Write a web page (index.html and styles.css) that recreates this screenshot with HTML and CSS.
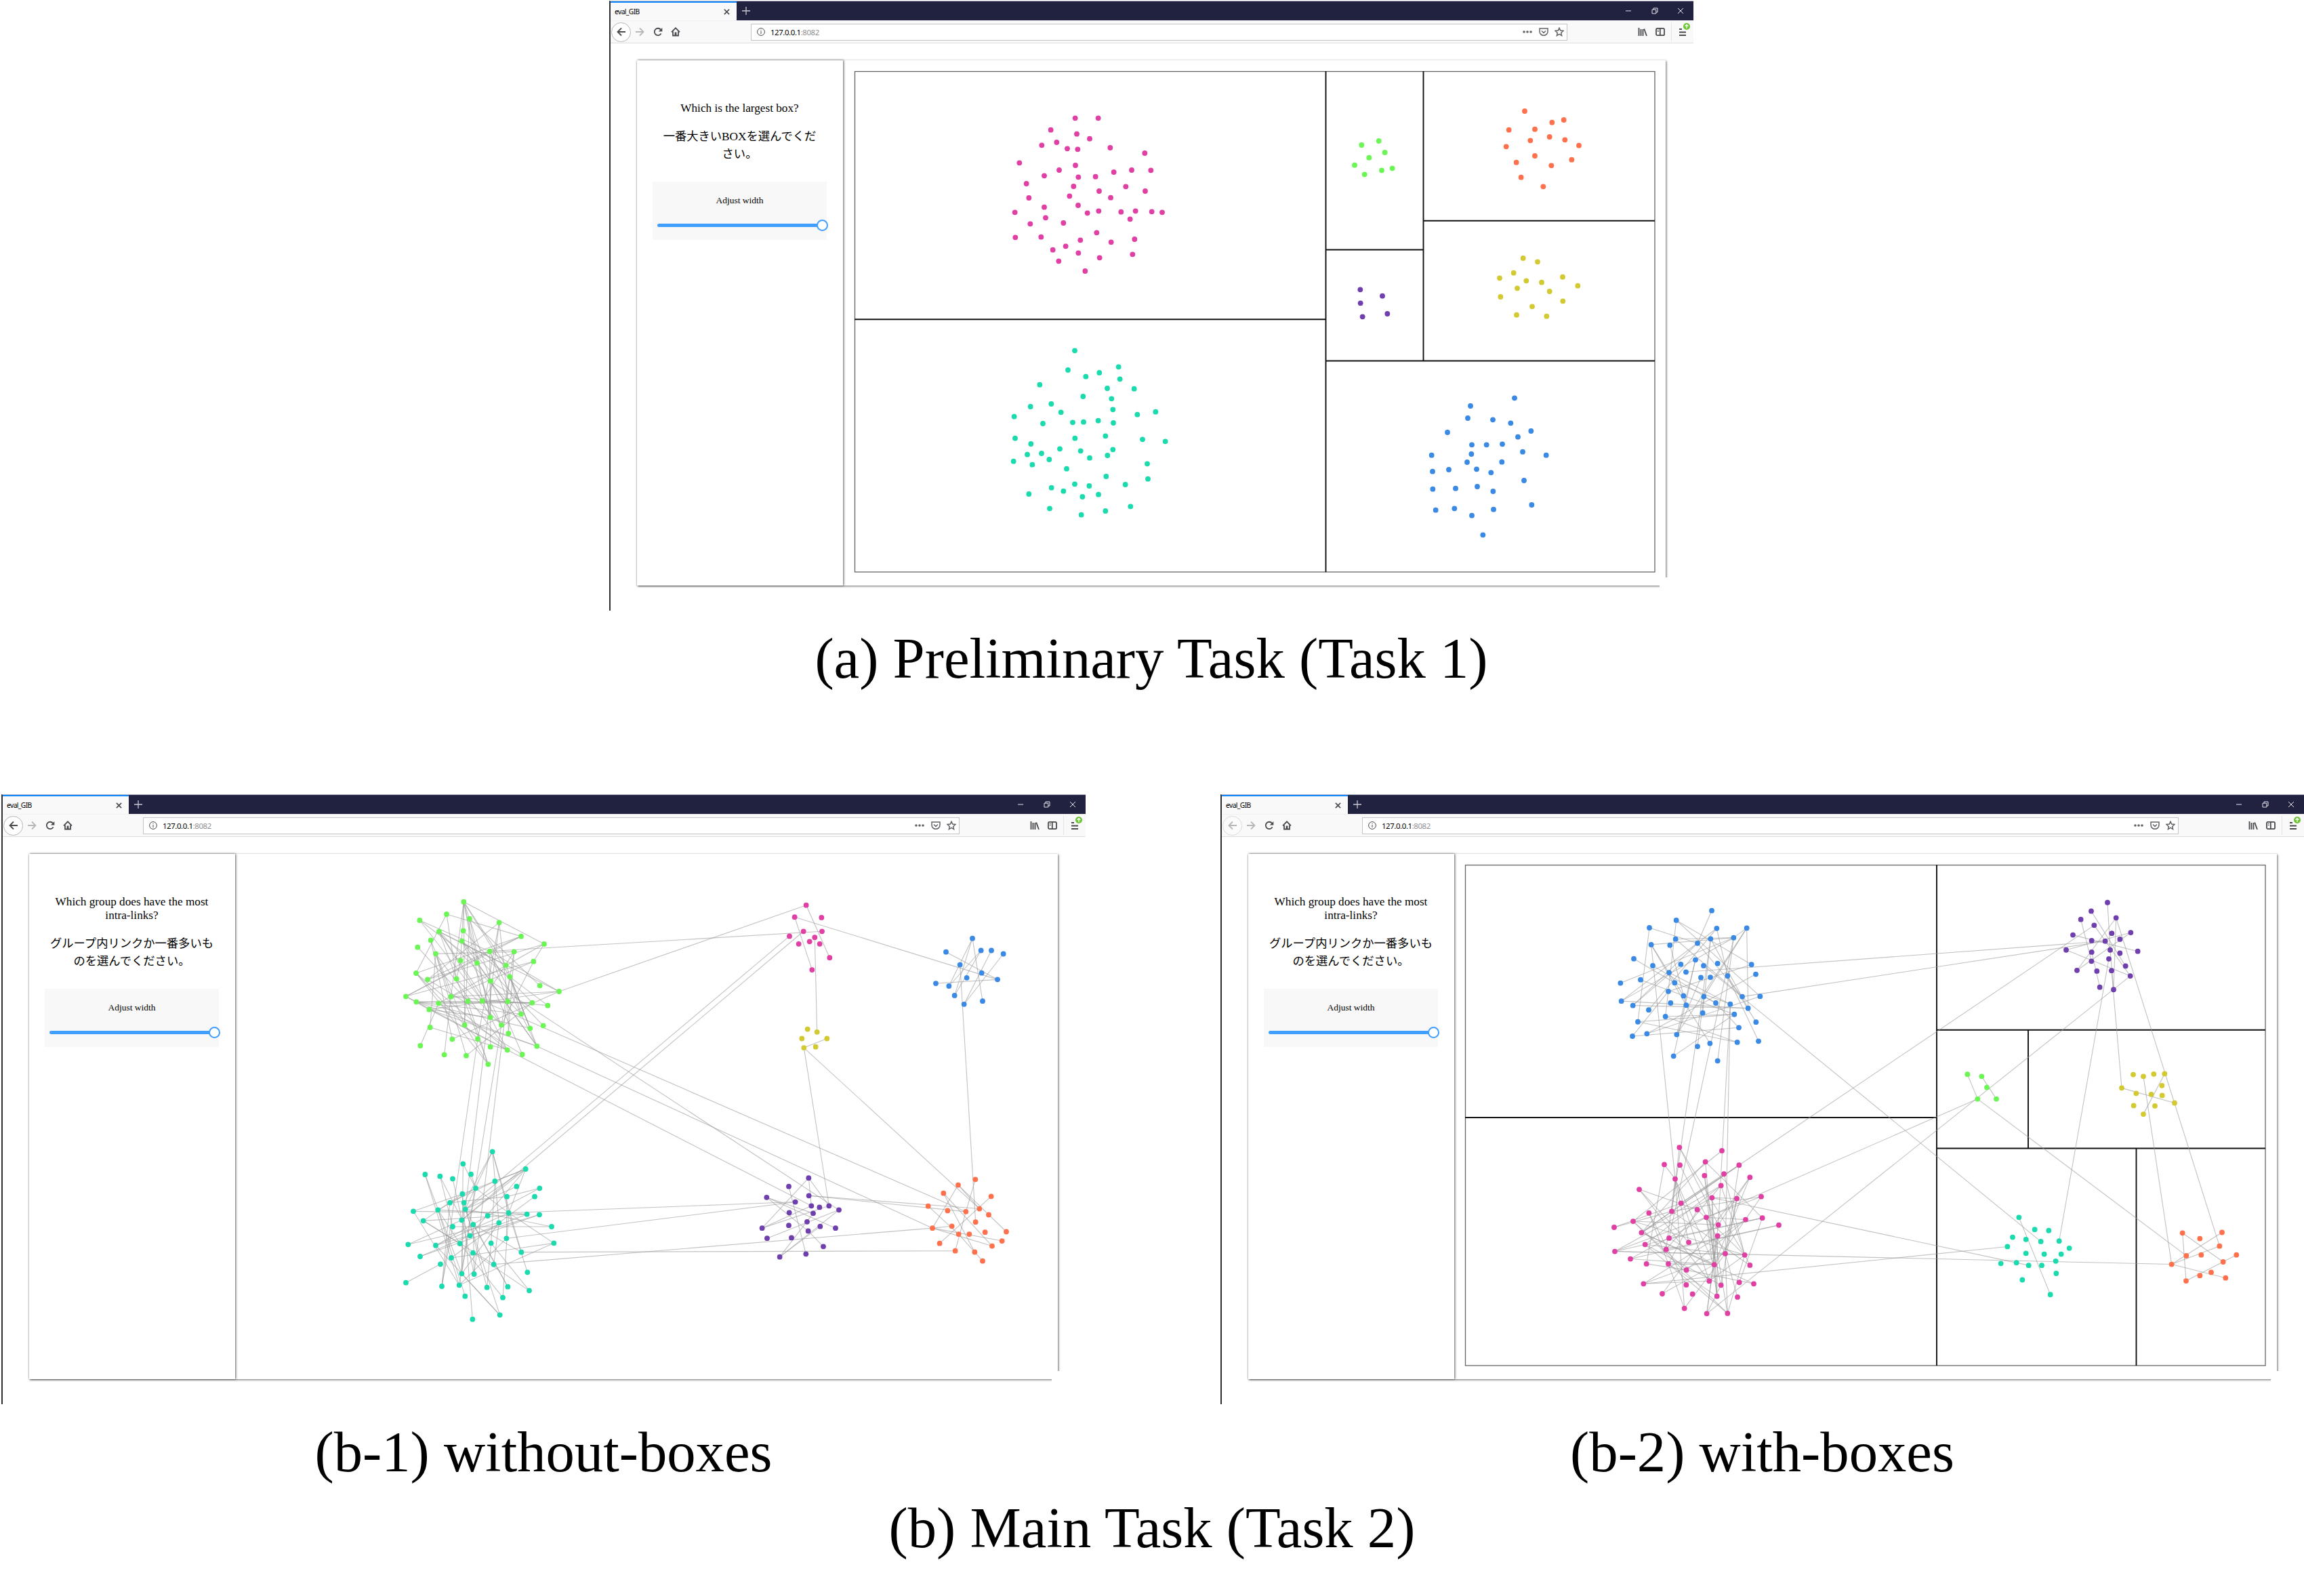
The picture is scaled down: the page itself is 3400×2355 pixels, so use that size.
FILE: index.html
```html
<!DOCTYPE html>
<html lang="ja">
<head>
  <meta charset="UTF-8" />
  <title>eval_GIB</title>
  <link rel="stylesheet" href="styles.css">
</head>
<body>
  <template id="chrome">
    <div class="tabs">
      <div class="tab">
        <span>eval_GIB</span>
        <svg class="tab-close" viewBox="0 0 10 10"><path d="M1 1l8 8M9 1l-8 8"/></svg>
      </div>
      <svg class="tab-new" viewBox="0 0 12 12"><path d="M6 0v12M0 6h12"/></svg>
      <div class="controls">
        <svg viewBox="0 0 10 10"><path d="M1 5h8"/></svg>
        <svg viewBox="0 0 10 10"><path d="M1 3.2h5.8V9H1zM3 3V1h6v6H7"/></svg>
        <svg viewBox="0 0 10 10"><path d="M1 1l8 8M9 1l-8 8"/></svg>
      </div>
    </div>
    <div class="toolbar">
      <div class="nav">
        <span class="back"><svg viewBox="0 0 14 14"><path d="M13 7H1.5M7 1.5L1.5 7L7 12.500"/></svg></span>
        <svg class="forward" viewBox="0 0 14 14"><path d="M1 7h11.500M7 1.500L12.500 7L7 12.500"/></svg>
        <svg viewBox="0 0 14 14"><path d="M11.600 9.400A5.200 5.200 0 1 1 11 3.600"/><path class="fill" d="M13.300 1v5.500H7.800z"/></svg>
        <svg viewBox="0 0 14 14"><path d="M1 7.300L7 1.300l6 6M3 6.500V12.500h8V6.500"/><path class="fill" d="M5.600 7.500h2.800V12.500H5.600z"/></svg>
      </div>
      <div class="url">
        <svg class="info" viewBox="0 0 12 12"><circle cx="6" cy="6" r="5.400"/><path d="M6 5v4M6 3v1"/></svg>
        <span class="address">127.0.0.1<span>:8082</span></span>
        <svg class="dots" viewBox="0 0 14 4"><circle cx="2" cy="2" r="1.800"/><circle cx="7" cy="2" r="1.800"/><circle cx="12" cy="2" r="1.800"/></svg>
        <svg class="pocket" viewBox="0 0 14 14"><path d="M1 2h12v4.500a6 5.800 0 0 1-12 0zM4 5.500l3 3l3-3"/></svg>
        <svg class="star" viewBox="0 0 14 14"><path d="M7 1.200l1.700 3.900l4.200.4l-3.200 2.900l.9 4.200L7 10.400l-3.600 2.200l.9-4.200L1.100 5.500l4.200-.4z"/></svg>
      </div>
      <div class="tools">
        <svg viewBox="0 0 14 14"><path d="M1.500 1v12M4.500 3v10M7.500 3v10M9.200 2.500l3.800 10.500"/></svg>
        <svg viewBox="0 0 14 14"><rect x="1" y="1.800" width="12" height="10.400" rx="1.800"/><path d="M6.800 2v10"/><path class="thin" d="M2.800 4.500h2M2.800 6.500h2"/></svg>
        <div class="menu">
          <svg viewBox="0 0 14 14"><path d="M2 3h4M2 7.500h10M2 12h10"/></svg>
          <svg class="update" viewBox="0 0 10 10"><circle cx="5" cy="5" r="5"/><path d="M5 8V2.500M2.600 4.800L5 2.400l2.400 2.400"/></svg>
        </div>
      </div>
    </div>
  </template>

  <div class="row row-a">
    <figure>
      <div class="window">
        <div class="app">
          <aside class="sidebar">
            <p>Which is the largest box?</p>
            <p class="ja">一番大きいBOXを選んでくだ<br>さい。</p>
            <div class="slider-box">
              <label>Adjust width</label>
              <div class="slider"><span class="thumb"></span></div>
            </div>
          </aside>
          <main><svg id="task1" class="graph" viewBox="1244 89 1214 775"></svg></main>
        </div>
      </div>
      <figcaption>(a) Preliminary Task (Task 1)</figcaption>
    </figure>
  </div>

  <div class="row row-b">
    <figure>
      <div class="window">
        <div class="app">
          <aside class="sidebar">
            <p>Which group does have the most intra-links?</p>
            <p class="ja">グループ内リンクか一番多いものを選んでください。</p>
            <div class="slider-box">
              <label>Adjust width</label>
              <div class="slider"><span class="thumb"></span></div>
            </div>
          </aside>
          <main><svg id="task2a" class="graph" viewBox="347 1260 1214 775"></svg></main>
        </div>
      </div>
      <figcaption>(b-1) without-boxes</figcaption>
    </figure>
    <figure>
      <div class="window no-history">
        <div class="app">
          <aside class="sidebar">
            <p>Which group does have the most intra-links?</p>
            <p class="ja">グループ内リンクか一番多いものを選んでください。</p>
            <div class="slider-box">
              <label>Adjust width</label>
              <div class="slider"><span class="thumb"></span></div>
            </div>
          </aside>
          <main><svg id="task2b" class="graph" viewBox="2146 1260 1214 775"></svg></main>
        </div>
      </div>
      <figcaption>(b-2) with-boxes</figcaption>
    </figure>
  </div>
  <p class="caption-b">(b) Main Task (Task 2)</p>

  <script src="graph.js"></script>
</body>
</html>
```
FILE: styles.css
```css
body {
  margin: 0;
  background: #fff;
  color: #000;
  font-family: "Liberation Serif", "Noto Sans CJK JP", serif;
}
svg {
  display: block;
  fill: none;
  stroke: #4a4a4f;
  stroke-width: 1.8;
}
.fill {
  fill: #4a4a4f;
  stroke: none;
}
.thin {
  stroke-width: 1;
}
.row {
  display: flex;
  justify-content: space-between;
}
.row-a {
  padding: 1px 0 0 899px;
}
.row-b {
  margin-top: 152px;
  padding: 0 0 0 2px;
}
figure {
  margin: 0;
  width: 1600px;
}
figcaption,
.caption-b {
  margin: 0;
  padding-top: 23px;
  font-size: 84.7px;
  line-height: 96px;
  text-align: center;
}
.caption-b {
  padding-top: 16px;
}
.row-b figure:last-child {
  width: 1599px;
}

/* browser window */
.window {
  height: 900px;
  box-sizing: border-box;
  border-top: 1px solid #b9bcc6;
  border-left: 2px solid #2e2e33;
  display: flex;
  flex-direction: column;
}
.tabs {
  display: flex;
  align-items: center;
  height: 28px;
  background: #20223f;
  font: 10.3px "Noto Sans", sans-serif;
}
.tab {
  box-sizing: border-box;
  width: 186px;
  height: 28px;
  padding: 0 10px 0 6px;
  border-top: 2px solid #0a84ff;
  background: #f9f9fa;
  display: flex;
  align-items: center;
  justify-content: space-between;
  letter-spacing: -0.6px;
}
.tab-close {
  width: 9px;
  height: 9px;
}
.tab-new {
  width: 12px;
  height: 12px;
  margin-left: 8px;
  stroke: #c9c9d2;
  stroke-width: 1.3;
}
.controls {
  margin-left: auto;
  margin-right: 14px;
  display: flex;
  gap: 28.5px;
}
.controls svg {
  width: 10px;
  height: 10px;
  stroke: #e4e4ea;
  stroke-width: 1;
}
.toolbar {
  box-sizing: border-box;
  display: flex;
  align-items: center;
  height: 34px;
  background: #f9f9fa;
  border-top: 1px solid #f1f1f3;
  border-bottom: 1px solid #dedee0;
}
.nav {
  display: flex;
  align-items: center;
  width: 207px;
}
.nav svg,
.tools svg {
  width: 14px;
  height: 14px;
}
.nav > svg {
  margin-right: 12.5px;
}
.back {
  box-sizing: border-box;
  width: 29px;
  height: 29px;
  margin: 0 6px 0 1px;
  border: 1px solid #b4b4b6;
  border-radius: 50%;
  background: #fff;
  display: flex;
  align-items: center;
  justify-content: center;
}
.nav .forward,
.no-history .back svg {
  stroke: #b7b7b9;
}
.no-history .back {
  border-color: #dcdcde;
  background: #fbfbfc;
}
.url {
  box-sizing: border-box;
  width: 1205px;
  height: 25px;
  padding: 0 4px 0 8px;
  border: 1px solid #c4c4c6;
  background: #fff;
  display: flex;
  align-items: center;
}
.info {
  width: 12px;
  height: 12px;
  margin-right: 8px;
  stroke-width: 1;
}
.address {
  flex: 1;
  font: 11.4px "Noto Sans", sans-serif;
  letter-spacing: -0.4px;
}
.address span {
  color: #909092;
}
.dots {
  width: 14px;
  height: 4px;
  fill: #636368;
  stroke: none;
}
.pocket,
.star {
  width: 14px;
  height: 14px;
  margin-left: 9.5px;
  stroke: #636368;
  stroke-width: 1.5;
}
.tools {
  flex: 1;
  display: flex;
  align-items: center;
  justify-content: flex-end;
  gap: 12px;
  align-self: stretch;
}
.menu {
  position: relative;
  display: flex;
  align-items: center;
  height: 28px;
  padding: 0 9px;
  margin-left: -3px;
  border-left: 1px solid #e4e4e6;
}
.tools .update {
  position: absolute;
  top: 1px;
  right: 5px;
  width: 10px;
  height: 10px;
  fill: #6cc333;
  stroke: #fff;
  stroke-width: 1.3;
}
.update circle {
  stroke: none;
}

/* evaluation app */
.app {
  flex: none;
  display: flex;
  width: 1518px;
  height: 775px;
  margin: 25px 0 0 39px;
  box-shadow: 1px 1px 3px rgba(0, 0, 0, 0.6);
  clip-path: polygon(-6px -6px, 1526px -6px, 1526px 763px, 1509px 763px, 1509px 783px, -6px 783px);
}
.sidebar {
  box-sizing: border-box;
  width: 304px;
  padding: 61px 24px 0 23px;
  box-shadow: 1px 0 3px rgba(0, 0, 0, 0.65);
  font-size: 17.2px;
  line-height: 20px;
  text-align: center;
}
.sidebar p {
  margin: 0 0 19px;
}
.sidebar .ja {
  margin-bottom: 27px;
  padding: 0 7px;
  font-size: 17.3px;
  line-height: 26px;
}
.slider-box {
  height: 86px;
  padding: 0 7px;
  box-sizing: border-box;
  background: #f8f8f8;
  font-size: 13.5px;
}
.slider-box label {
  display: block;
  padding-top: 18px;
}
.slider {
  display: flex;
  align-items: center;
  justify-content: flex-end;
  height: 5px;
  margin-top: 24px;
  border-radius: 3px;
  background: #409eff;
}
.thumb {
  flex: none;
  box-sizing: border-box;
  width: 17px;
  height: 17px;
  margin-right: -8.5px;
  border: 2px solid #409eff;
  border-radius: 50%;
  background: #fff;
}
main {
  flex: 1;
}

/* graph */
.graph {
  width: 1214px;
  height: 775px;
}
.graph circle {
  stroke: none;
}
.link {
  stroke: #999;
  stroke-opacity: 0.6;
  stroke-width: 1.1;
}
.box {
  stroke: #111;
  stroke-width: 1.9;
}
.frame {
  stroke: #666;
  stroke-width: 1.3;
}
```
FILE: graph.js
```js
const NS = "http://www.w3.org/2000/svg";
const C = {
  pink: "#e03fa3", teal: "#1bdbae", green: "#6bf655", purple: "#6f3fae",
  red: "#ff704c", yellow: "#d3c932", blue: "#3a89e4"
};

// each group: colour, origin and scale of its grid, nodes "x,y", links "a-b"
const task1 = {
  frame: [1261.5, 105.5, 1180.5, 738.5],
  boxes: "M1956.5 105V844M1261 471.300H1956.5M2100.5 105V532M1957 368.500H2100M2101 325.800H2442M1957 532.500H2442",
  groups: {
    p: { color: C.pink, at: [1460, 130, 3, 3], nodes: "380,133 482,133 272,185 387,203 444,224 232,253 298,240 345,268 391,271 535,264 688,288 133,331 381,342 309,363 243,388 394,394 470,392 551,372 630,363 715,364 164,423 373,435 486,456 604,436 690,456 175,486 355,478 537,485 393,519 243,527 113,550 249,574 181,601 328,597 434,553 484,544 583,548 647,544 719,547 765,550 623,580 115,661 229,659 475,640 403,673 338,700 281,716 394,730 539,682 643,669 634,736 488,751 307,766 424,810" },
    t: { color: C.teal, at: [1460, 490, 3, 3], nodes: "378,82 348,168 427,197 487,180 572,154 578,208 223,233 522,249 641,251 415,285 541,295 182,330 274,318 317,355 547,343 655,365 736,353 110,374 237,405 369,400 417,398 482,392 549,402 114,470 184,495 379,470 514,460 678,475 779,484 168,542 231,537 312,517 404,526 547,520 523,546 444,557 107,572 190,587 265,564 342,605 699,583 517,639 702,650 275,689 378,673 442,681 602,675 328,704 175,717 412,729 483,719 267,781 407,809 514,792 625,772" },
    g: { color: C.green, at: [1940, 90, 3, 3], nodes: "208,372 284,354 311,405 241,428 177,461 297,484 344,475 221,502" },
    u: { color: C.purple, at: [1940, 90, 3, 3], nodes: "202,1012 300,1040 203,1072 212,1132 322,1119" },
    r: { color: C.red, at: [1940, 90, 3, 3], nodes: "930,222 860,305 975,302 1051,272 1103,261 955,352 1040,336 1108,349 848,379 1170,374 975,420 893,449 1048,463 1138,437 914,515 1012,556" },
    y: { color: C.yellow, at: [1940, 90, 3, 3], nodes: "923,873 987,889 881,938 819,961 937,973 1005,980 1098,956 1165,995 897,1006 1040,1020 823,1044 1099,1063 963,1087 894,1124 1027,1130" },
    b: { color: C.blue, at: [2060, 540, 3, 3], nodes: "525,142 330,177 318,231 429,238 508,253 228,294 598,288 540,314 336,349 401,349 471,346 334,390 561,380 158,395 665,395 315,426 469,425 162,467 234,459 357,457 421,472 567,507 163,545 264,542 360,534 430,555 176,638 259,631 336,662 432,635 601,615 385,748" }
  }
};

const task2a = {
  groups: {
    g: {
      color: C.green, at: [580, 1310, 3, 3],
      nodes: "313,62 237,117 118,144 339,137 470,154 204,194 311,190 567,215 167,232 305,236 669,249 109,263 189,292 428,281 536,283 299,322 372,333 500,343 622,326 102,378 153,406 281,403 432,413 517,394 650,433 735,459 57,481 103,505 202,511 256,482 331,502 395,501 508,503 616,509 685,521 160,539 567,559 431,574 317,607 480,607 164,618 607,622 665,610 511,645 262,670 375,669 121,699 227,739 324,743 431,704 506,718 637,701 572,738 421,781",
      links: "0-10 0-29 0-38 0-31 0-17 0-22 0-15 0-23 0-37 1-7 1-19 1-21 2-13 2-31 2-16 3-38 3-37 3-24 4-20 4-32 4-45 5-17 5-36 5-31 5-53 5-39 5-25 6-33 7-19 7-26 7-20 8-38 8-44 9-34 9-42 9-51 9-39 10-28 10-18 10-20 11-30 12-14 12-40 12-29 12-48 12-50 13-26 13-37 13-32 13-51 13-25 14-39 14-43 14-31 15-21 16-51 17-41 18-26 18-29 18-39 19-45 19-50 19-53 20-37 21-39 22-49 22-52 23-51 23-41 23-36 25-35 25-44 25-29 26-27 26-35 27-33 27-36 27-51 27-50 27-41 27-32 28-33 29-34 29-47 30-53 31-33 31-50 35-50 35-37 38-53 40-50 33-48 43-32 46-28 28-52 35-51"
    },
    t: {
      color: C.teal, at: [580, 1680, 3, 3],
      nodes: "440,58 310,112 142,159 208,167 264,178 345,158 587,135 451,189 366,220 547,212 649,220 307,245 504,257 627,257 252,284 314,284 90,322 199,316 320,313 134,364 304,361 419,342 512,329 593,335 648,337 264,390 355,381 469,373 702,390 341,430 502,442 67,469 189,473 296,465 434,463 712,463 120,522 258,528 354,506 568,503 210,556 446,557 57,638 304,598 359,600 595,592 216,654 293,649 416,659 508,656 603,673 319,698 486,704 473,781 352,800",
      links: "0-18 0-15 0-27 0-39 0-22 1-43 1-8 2-43 2-47 3-25 3-29 4-44 5-8 6-7 6-18 6-20 6-22 6-29 7-14 7-34 8-17 8-43 8-22 9-18 10-12 10-21 11-16 11-54 12-30 12-14 13-27 14-46 15-43 15-48 16-22 16-47 17-23 17-33 18-49 18-53 18-28 19-11 19-33 19-41 20-31 21-32 22-32 22-35 22-45 22-52 23-29 23-19 24-36 24-32 25-46 25-28 26-44 26-49 31-27 32-53 33-52 34-48 34-50 35-37 35-47 36-29 37-27 38-50 39-26 40-42 43-27 47-30 51-17 53-43 41-27 6-11"
    },
    p: {
      color: C.pink, at: [1100, 1310, 3, 2.8],
      nodes: "269,72 218,121 337,123 257,180 339,180 195,200 307,205 284,222 236,232 329,232 373,289 295,339",
      links: "0-10 1-11"
    },
    b: {
      color: C.blue, at: [1100, 1310, 3, 2.8],
      nodes: "1005,209 888,265 1043,259 1089,259 1142,273 950,318 1046,352 980,372 1116,379 843,395 901,406 926,445 968,481 1050,468",
      links: "0-10 0-11 0-13 1-8 2-11 2-10 3-12 4-12 8-9"
    },
    y: {
      color: C.yellow, at: [1100, 1310, 3, 2.8],
      nodes: "275,584 317,596 250,623 361,623 259,661 311,657",
      links: "3-4"
    },
    u: {
      color: C.purple, at: [1100, 1310, 3, 2.8],
      nodes: "280,1199 192,1234 94,1279 281,1272 221,1298 292,1314 328,1320 370,1314 414,1331 194,1342 300,1345 273,1380 192,1395 331,1399 399,1406 74,1406 278,1418 96,1448 204,1446 345,1482 268,1513 152,1525",
      links: "0-15 0-7 0-5 1-20 2-10 2-14 2-16 5-15 7-15 8-17 8-21 13-21 10-21 16-19"
    },
    r: {
      color: C.red, at: [1100, 1310, 3, 2.8],
      nodes: "1018,1205 942,1228 877,1262 1088,1275 809,1315 895,1334 976,1338 1036,1326 1077,1351 1019,1381 914,1398 828,1406 1155,1421 1061,1423 944,1431 991,1431 1136,1459 860,1469 1092,1480 929,1500 1015,1505 1050,1542",
      links: "0-6 1-11 1-7 3-17 2-20 2-18 4-14 11-10 11-18 11-16 14-21 6-19 1-12"
    }
  },
  cross: "g13-p4 g25-p0 g31-r6 g22-u8 g51-r11 g50-u5 p5-t18 p3-t20 g45-t46 g4-t18 g39-t47 g23-t44 p6-y1 p1-b8 b5-r9 y4-u7 y4-r7 u3-r7 u3-r6 t22-u4 t30-u4 t41-r11 t39-r19"
};

const task2b = {
  frame: [2162.5, 1276.5, 1180.5, 738.5],
  boxes: "M2858 1276V2015M2162 1649H2858M2858 1519.700H3343M2993 1519V1694M2858 1694.500H3343M3152.5 1694V2015",
  groups: {
    b: {
      color: C.blue, at: [2360, 1320, 3, 2.45],
      nodes: "498,58 341,93 222,120 520,122 653,121 338,161 493,160 595,156 230,181 313,183 435,176 153,232 426,236 361,252 237,257 462,257 524,249 674,253 309,282 384,280 693,288 94,320 183,308 334,319 450,300 492,299 568,294 306,350 98,385 373,366 463,369 633,369 712,368 149,401 316,392 385,400 516,392 580,396 659,411 219,417 293,441 458,428 598,433 171,460 694,461 618,481 147,512 211,503 343,506 611,534 705,530 490,538 435,549 329,584 524,601",
      links: "0-10 1-17 1-40 1-32 2-43 2-10 3-28 3-39 3-26 4-38 4-7 4-30 4-48 5-7 5-31 6-38 6-41 7-8 7-21 7-28 7-54 8-35 8-29 9-35 10-31 11-23 12-48 13-33 14-36 17-27 18-37 20-47 22-42 23-37 24-48 26-44 26-50 27-46 28-38 30-36 32-47 33-38 35-51 36-45 42-40 42-53 43-49 43-42 46-45 40-49 30-52 12-53 10-33"
    },
    p: {
      color: C.pink, at: [2360, 1320, 3, 2.45],
      nodes: "355,914 543,926 288,976 357,978 470,966 619,978 336,1028 466,1016 552,1010 667,1022 177,1066 539,1052 499,1096 609,1099 717,1092 362,1116 434,1139 321,1145 220,1151 474,1167 648,1175 722,1169 150,1181 66,1203 527,1194 795,1195 187,1222 524,1234 309,1242 396,1257 203,1265 69,1290 296,1283 138,1317 558,1298 644,1303 209,1335 306,1335 509,1338 667,1340 386,1357 487,1397 620,1402 684,1407 196,1407 385,1411 539,1412 279,1443 413,1444 521,1452 612,1455 377,1496 476,1515 568,1514",
      links: "0-17 0-35 0-24 1-22 2-6 2-36 3-34 4-21 4-26 4-49 5-17 5-15 5-26 5-34 6-51 6-38 6-41 6-32 6-29 7-38 7-53 8-15 8-35 9-38 9-24 10-29 10-41 10-16 11-30 11-32 11-35 11-26 12-49 12-38 13-12 13-46 13-34 14-31 14-17 14-38 16-35 16-37 17-23 17-39 17-26 18-37 18-45 19-20 19-46 19-49 20-40 20-44 21-31 21-28 21-42 22-24 22-40 22-53 22-35 24-52 25-33 25-32 26-38 26-43 27-52 27-49 28-38 30-34 31-35 31-12 33-38 36-40 37-51 37-38 40-43 41-44 34-44 38-47 34-51 34-53 35-53 35-39 35-41 46-52 46-30 49-37 50-34 53-30 47-9 23-15 33-19"
    },
    u: {
      color: C.purple, at: [2840, 1310, 3, 2.529],
      nodes: "810,55 738,87 692,118 751,140 848,112 657,176 740,197 800,199 829,170 865,192 913,167 627,232 740,240 822,232 865,244 944,237 739,274 816,265 890,292 675,308 763,311 828,309 911,329 776,371 837,380",
      links: "0-13 1-18 2-16 12-23 3-22 4-24 4-19 5-15 10-11 10-19 11-22 13-24"
    },
    g: {
      color: C.green, at: [2840, 1310, 3, 2.529],
      nodes: "190,696 253,704 276,745 235,788 318,788",
      links: "0-3 1-4"
    },
    y: {
      color: C.yellow, at: [2840, 1310, 3, 2.529],
      nodes: "924,697 969,704 1015,695 1063,694 1051,738 873,747 937,767 1004,771 1052,775 1107,803 926,813 1020,814 969,845",
      links: "5-9 3-12"
    },
    t: {
      color: C.teal, at: [2840, 1310, 3, 2.529],
      nodes: "418,1230 488,1275 550,1279 390,1304 449,1312 515,1320 596,1318 641,1345 367,1339 449,1364 530,1367 605,1367 581,1393 338,1402 407,1399 461,1409 519,1409 583,1439 433,1463 557,1518",
      links: "0-19"
    },
    r: {
      color: C.red, at: [2840, 1310, 3, 2.529],
      nodes: "1142,1288 1317,1286 1219,1309 1306,1337 1159,1373 1225,1370 1381,1370 1322,1396 1094,1405 1269,1435 1219,1447 1333,1456 1158,1467",
      links: "0-12 0-7 1-8 3-8 6-12 8-11"
    }
  },
  cross: "b8-p6 b6-p17 b7-p28 b37-p24 b37-p34 b19-u7 b31-u7 b15-t5 p5-u3 p19-g3 p52-u22 p12-t15 p31-r8 p44-t8 u21-y5 u4-r3 u17-t6 g3-r4 y1-r8"
};

function add(svg, tag, attrs) {
  const el = document.createElementNS(NS, tag);
  for (const k in attrs) el.setAttribute(k, attrs[k]);
  svg.appendChild(el);
}

function draw(id, data) {
  const svg = document.getElementById(id);
  const pos = {};

  for (const key in data.groups) {
    const [x, y, kx, ky] = data.groups[key].at;
    data.groups[key].nodes.split(" ").forEach((n, i) => {
      const [nx, ny] = n.split(",");
      pos[key + i] = [x + nx / kx, y + ny / ky];
    });
  }

  const link = (a, b) => add(svg, "path", { class: "link", d: `M${pos[a]}L${pos[b]}` });

  if (data.frame) {
    const [x, y, width, height] = data.frame;
    add(svg, "rect", { class: "frame", x, y, width, height });
    add(svg, "path", { class: "box", d: data.boxes });
  }
  for (const key in data.groups) {
    const links = data.groups[key].links;
    if (links) links.split(" ").forEach(l => {
      const [a, b] = l.split("-");
      link(key + a, key + b);
    });
  }
  if (data.cross) data.cross.split(" ").forEach(l => link(...l.split("-")));

  for (const n in pos) {
    add(svg, "circle", { cx: pos[n][0], cy: pos[n][1], r: 3.9, fill: data.groups[n[0]].color });
  }
}

document.querySelectorAll(".window").forEach(w => {
  w.prepend(document.getElementById("chrome").content.cloneNode(true));
});
draw("task1", task1);
draw("task2a", task2a);
draw("task2b", task2b);
```
